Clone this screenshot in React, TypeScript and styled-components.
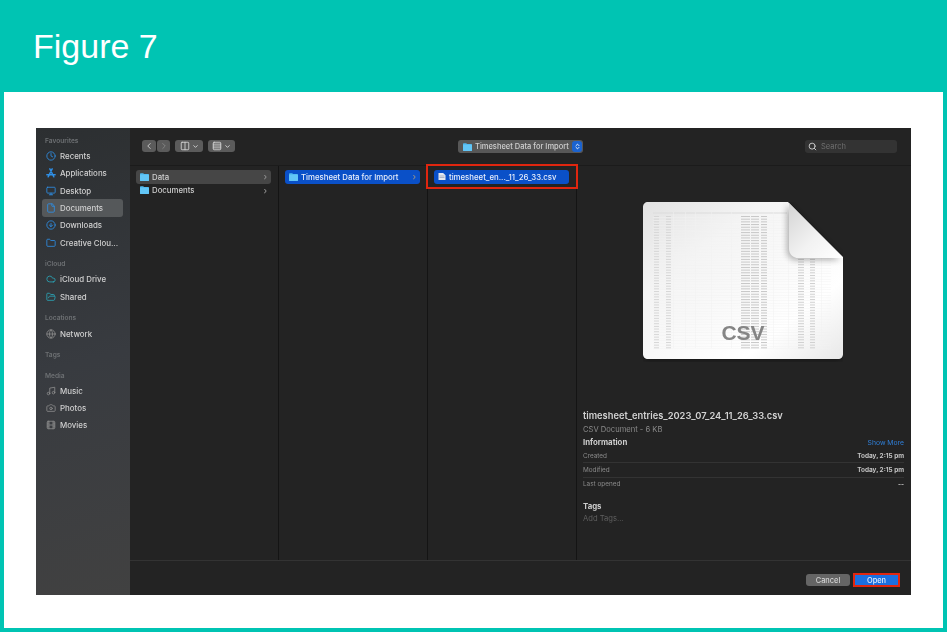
import React from 'react';
import styled, { createGlobalStyle } from 'styled-components';
import {
  Camera,
  ChevronDown,
  ChevronLeft,
  ChevronRight,
  ChevronsUpDown,
  CircleArrowDown,
  Clock,
  Cloud,
  Columns2,
  File,
  Film,
  Folder,
  FolderOpen,
  Globe,
  Monitor,
  Music,
  Rows4,
  Search,
} from 'lucide-react';

const GlobalStyle = createGlobalStyle`
  html, body {
    margin: 0;
    padding: 0;
    background: #00c4b3;
  }
  * {
    box-sizing: border-box;
  }
`;

const AppsIcon = ({ size = 10 }: { size?: number }) => (
  <svg width={size} height={size} viewBox="0 0 12 12" fill="none" stroke="currentColor" strokeWidth="1.7" strokeLinecap="round">
    <path d="M7.4 1 2.6 10.6M4.6 1l4.8 9.6M1 8h10" />
  </svg>
);

const FolderGlyph = () => (
  <svg width="9" height="8" viewBox="0 0 9 8">
    <path d="M0 1.2C0 .5.4.2 1 .2h2.2l.8.8H8c.6 0 1 .4 1 1V7c0 .6-.4 1-1 1H1C.4 8 0 7.6 0 7z" fill="#4fb9f0" />
    <rect y="1.8" width="9" height="6.2" rx=".8" fill="#62c6f7" />
  </svg>
);

const FileGlyph = () => (
  <svg width="8" height="7" viewBox="0 0 8 7">
    <path d="M.5 0h4.6L7.5 2.2V7H.5z" fill="#e4e8f0" />
    <path d="M1.5 3h5M1.5 4.5h5" stroke="#8a94ac" strokeWidth=".6" />
  </svg>
);

const rowYs = Array.from({ length: 50 }, (_, i) => 14 + i * 2.68);
const dataCols = [
  [11, 5],
  [23, 5],
  [98, 9],
  [108, 8],
  [118, 6],
];
const lowerCols = [
  [155, 6],
  [167, 5],
];
const gridXs = [30, 42, 52, 68, 88, 130, 145, 178];

const DocumentPreview = () => (
  <svg width="200" height="160" viewBox="0 0 200 160">
    <defs>
      <linearGradient id="sheet" x1="0" y1="0" x2="1" y2="1">
        <stop offset="0" stopColor="#e2e2e2" />
        <stop offset=".3" stopColor="#f4f4f4" />
        <stop offset=".75" stopColor="#ffffff" />
        <stop offset="1" stopColor="#e8e8e8" />
      </linearGradient>
      <linearGradient id="fold" x1="0" y1="0" x2="1" y2="1">
        <stop offset="0" stopColor="#d4d4d4" />
        <stop offset=".55" stopColor="#f2f2f2" />
        <stop offset="1" stopColor="#ffffff" />
      </linearGradient>
      <filter id="drop" x="-10%" y="-10%" width="120%" height="120%">
        <feGaussianBlur stdDeviation="3" />
      </filter>
      <filter id="soft" x="-2%" y="-2%" width="104%" height="104%">
        <feGaussianBlur stdDeviation=".35" />
      </filter>
    </defs>
    <path
      d="M6 1h139l54 54v97c0 3-2 5-5 5H6c-3 0-5-2-5-5V6c0-3 2-5 5-5z"
      fill="#000"
      opacity=".4"
      filter="url(#drop)"
      transform="translate(0 1.5)"
    />
    <path d="M5 0h140l55 55v97c0 3-2 5-5 5H5c-3 0-5-2-5-5V5c0-3 2-5 5-5z" fill="url(#sheet)" />
    <g filter="url(#soft)">
      <rect x="10" y="10.5" width="134" height="1" fill="#dcdcdc" />
      {gridXs.map((x) => (
        <rect key={x} x={x} y={x > 145 ? 56 : 10} width=".5" height={x > 145 ? 90 : 136} fill="#f0f0f0" />
      ))}
      {rowYs.map((y) => (
        <g key={y}>
          <rect x="10" y={y + 1.3} width={y > 55 ? 178 : 134} height=".4" fill="#f1f1f1" />
          {dataCols.map(([x, w]) => (
            <rect key={x} x={x} y={y} width={w} height="1" fill={x > 90 ? '#c8c8c8' : '#d6d6d6'} />
          ))}
          {y > 56 &&
            lowerCols.map(([x, w]) => (
              <rect key={x} x={x} y={y} width={w} height="1" fill="#d0d0d0" />
            ))}
        </g>
      ))}
    </g>
    <text x="100" y="138" textAnchor="middle" fontFamily="'Liberation Sans', sans-serif" fontWeight="700" fontSize="21" fill="#858585">
      CSV
    </text>
    <path d="M144 3v46c0 5 4 9 9 9h44z" fill="#000" opacity=".3" filter="url(#drop)" />
    <path d="M146 1v46c0 5 4 9 9 9h45z" fill="url(#fold)" />
  </svg>
);

type SidebarItem = { label: string; icon: React.ReactNode; tone?: string; active?: boolean };
type SidebarGroup = { title: string; items: SidebarItem[]; extra?: boolean };

const sidebarGroups: SidebarGroup[] = [
  {
    title: 'Favourites',
    items: [
      { label: 'Recents', icon: <Clock size={10} /> },
      { label: 'Applications', icon: <AppsIcon /> },
      { label: 'Desktop', icon: <Monitor size={10} /> },
      { label: 'Documents', icon: <File size={10} />, active: true },
      { label: 'Downloads', icon: <CircleArrowDown size={10} /> },
      { label: 'Creative Clou...', icon: <Folder size={10} /> },
    ],
  },
  {
    title: 'iCloud',
    items: [
      { label: 'iCloud Drive', icon: <Cloud size={10} />, tone: '#2ba6b8' },
      { label: 'Shared', icon: <FolderOpen size={10} />, tone: '#2ba6b8' },
    ],
  },
  {
    title: 'Locations',
    items: [{ label: 'Network', icon: <Globe size={10} />, tone: '#8b8b8b' }],
  },
  { title: 'Tags', items: [], extra: true },
  {
    title: 'Media',
    items: [
      { label: 'Music', icon: <Music size={10} />, tone: '#8b8b8b' },
      { label: 'Photos', icon: <Camera size={10} />, tone: '#8b8b8b' },
      { label: 'Movies', icon: <Film size={10} />, tone: '#8b8b8b' },
    ],
  },
];

const infoRows = [
  { label: 'Created', value: 'Today, 2:15 pm' },
  { label: 'Modified', value: 'Today, 2:15 pm' },
  { label: 'Last opened', value: '--' },
];

export default function App() {
  return (
    <>
      <GlobalStyle />
      <Page>
        <Header>Figure 7</Header>
        <Card>
          <Dialog>
            <Sidebar>
              {sidebarGroups.map((group) => (
                <SidebarSection key={group.title} $extra={group.extra}>
                  <SectionLabel>{group.title}</SectionLabel>
                  {group.items.map((item) => (
                    <SidebarRow key={item.label} $active={item.active}>
                      <RowIcon $tone={item.tone}>{item.icon}</RowIcon>
                      {item.label}
                    </SidebarRow>
                  ))}
                </SidebarSection>
              ))}
            </Sidebar>
            <Main>
              <Toolbar>
                <NavGroup>
                  <ToolButton $width={14}>
                    <ChevronLeft size={10} />
                  </ToolButton>
                  <ToolButton $width={13} $dim>
                    <ChevronRight size={10} />
                  </ToolButton>
                </NavGroup>
                <ToolButton $width={28}>
                  <Columns2 size={10} />
                  <ChevronDown size={7} strokeWidth={3} />
                </ToolButton>
                <ToolButton $width={27}>
                  <Rows4 size={10} />
                  <ChevronDown size={7} strokeWidth={3} />
                </ToolButton>
                <LocationPicker>
                  <FolderGlyph />
                  Timesheet Data for Import
                  <StepperBadge>
                    <ChevronsUpDown size={7} strokeWidth={3} />
                  </StepperBadge>
                </LocationPicker>
                <SearchBox>
                  <Search size={9} color="#c8c8c8" strokeWidth={2.6} />
                  Search
                </SearchBox>
              </Toolbar>
              <Browser>
                <Column>
                  <ColumnRow $state="muted">
                    <FolderGlyph />
                    <RowName>Data</RowName>
                    <Caret>›</Caret>
                  </ColumnRow>
                  <ColumnRow>
                    <FolderGlyph />
                    <RowName>Documents</RowName>
                    <Caret>›</Caret>
                  </ColumnRow>
                </Column>
                <Column>
                  <ColumnRow $state="selected">
                    <FolderGlyph />
                    <RowName>Timesheet Data for Import</RowName>
                    <Caret>›</Caret>
                  </ColumnRow>
                </Column>
                <Column>
                  <ColumnRow $state="selected" $flagged>
                    <FileGlyph />
                    <RowName>timesheet_en..._11_26_33.csv</RowName>
                  </ColumnRow>
                </Column>
                <Preview>
                  <PreviewArt>
                    <DocumentPreview />
                  </PreviewArt>
                  <FileName>timesheet_entries_2023_07_24_11_26_33.csv</FileName>
                  <FileKind>CSV Document - 6 KB</FileKind>
                  <InfoHeading>
                    <HeadingText>Information</HeadingText>
                    <ShowMore>Show More</ShowMore>
                  </InfoHeading>
                  {infoRows.map((row, i) => (
                    <InfoRow key={row.label} $last={i === infoRows.length - 1}>
                      <InfoLabel>{row.label}</InfoLabel>
                      <InfoValue>{row.value}</InfoValue>
                    </InfoRow>
                  ))}
                  <TagsHeading>Tags</TagsHeading>
                  <AddTags>Add Tags...</AddTags>
                </Preview>
              </Browser>
              <Footer>
                <CancelButton>Cancel</CancelButton>
                <OpenButton>Open</OpenButton>
              </Footer>
            </Main>
          </Dialog>
        </Card>
      </Page>
    </>
  );
}

const Page = styled.div`
  width: 947px;
  height: 632px;
  padding: 0 4px 4px;
  display: flex;
  flex-direction: column;
  background: #00c4b3;
  overflow: hidden;
`;

const Header = styled.div`
  height: 92px;
  padding: 27px 0 0 29px;
  font-family: 'Liberation Sans', Arial, sans-serif;
  font-size: 34px;
  line-height: 39px;
  color: #ffffff;
`;

const Card = styled.div`
  flex: 1;
  min-width: 0;
  background: #ffffff;
  padding: 36px 32px 33px;
  display: flex;
`;

const Dialog = styled.div`
  flex: 1;
  min-width: 0;
  display: flex;
  background: #232323;
  font-family: Inter, 'Liberation Sans', sans-serif;
  filter: blur(0.35px);
`;

const Sidebar = styled.div`
  width: 94px;
  flex: none;
  padding: 8px 7px 0 6px;
  background: linear-gradient(165deg, #2c2f31 0%, #383b40 50%, #414141 100%);
`;

const SidebarSection = styled.div<{ $extra?: boolean }>`
  margin-bottom: ${(p) => (p.$extra ? '9px' : '8px')};
`;

const SectionLabel = styled.div`
  height: 11.5px;
  padding-left: 3px;
  font-size: 6.6px;
  font-weight: 600;
  line-height: 11.5px;
  color: #6d7073;
`;

const SidebarRow = styled.div<{ $active?: boolean }>`
  height: 17.3px;
  padding-left: 4px;
  display: flex;
  align-items: center;
  gap: 4px;
  border-radius: 3px;
  font-size: 7.9px;
  font-weight: 500;
  color: #d0d0d0;
  white-space: nowrap;
  background: ${(p) => (p.$active ? '#55585a' : 'transparent')};
`;

const RowIcon = styled.span<{ $tone?: string }>`
  width: 10px;
  height: 10px;
  display: flex;
  color: ${(p) => p.$tone ?? '#2f8fe6'};
`;

const Main = styled.div`
  flex: 1;
  min-width: 0;
  display: flex;
  flex-direction: column;
`;

const Toolbar = styled.div`
  height: 38px;
  flex: none;
  padding: 12px 13px 0 12px;
  display: flex;
  align-items: flex-start;
  gap: 5px;
  border-bottom: 1px solid #1b1b1b;
`;

const NavGroup = styled.div`
  display: flex;
  gap: 1px;
`;

const ToolButton = styled.div<{ $width: number; $dim?: boolean }>`
  width: ${(p) => p.$width}px;
  height: 12px;
  display: flex;
  align-items: center;
  justify-content: center;
  gap: 2px;
  border-radius: 3px;
  background: #5b5b5b;
  color: ${(p) => (p.$dim ? '#8a8a8a' : '#d8d8d8')};
`;

const LocationPicker = styled.div`
  width: 125px;
  height: 13px;
  margin-left: 218px;
  padding: 0 1px 0 5px;
  display: flex;
  align-items: center;
  gap: 3px;
  border-radius: 3px;
  background: #575757;
  font-size: 7.5px;
  font-weight: 500;
  white-space: nowrap;
  color: #cfcfcf;
`;

const StepperBadge = styled.span`
  width: 10px;
  height: 11px;
  margin-left: auto;
  display: flex;
  align-items: center;
  justify-content: center;
  border-radius: 3px;
  background: #1b63d0;
  color: #ffffff;
`;

const SearchBox = styled.div`
  width: 92px;
  height: 13px;
  margin-left: 217px;
  padding-left: 3px;
  display: flex;
  align-items: center;
  gap: 4px;
  border-radius: 3px;
  background: #333333;
  font-size: 7.5px;
  color: #6f6f6f;
`;

const Browser = styled.div`
  flex: 1;
  min-height: 0;
  display: grid;
  grid-template-columns: 149px 149px 149px minmax(0, 1fr);
`;

const Column = styled.div`
  padding: 4px 7px 0 6px;
  border-right: 1px solid #141414;
`;

const ColumnRow = styled.div<{ $state?: 'muted' | 'selected'; $flagged?: boolean }>`
  position: relative;
  height: 13.5px;
  padding: 0 4px 0 3.5px;
  display: flex;
  align-items: center;
  gap: 3.5px;
  border-radius: 3px;
  font-size: 7.8px;
  font-weight: 500;
  white-space: nowrap;
  color: ${(p) => (p.$state === 'selected' ? '#e8eefb' : '#cfcfcf')};
  background: ${(p) =>
    p.$state === 'selected' ? '#0a50c8' : p.$state === 'muted' ? '#464646' : 'transparent'};

  ${(p) =>
    p.$flagged &&
    `
    &::after {
      content: '';
      position: absolute;
      inset: -6px -9px -5px -8px;
      border: 2px solid #e0260f;
    }
  `}
`;

const RowName = styled.span`
  flex: 1;
`;

const Caret = styled.span`
  font-size: 9px;
  line-height: 9px;
  color: #8e8e8e;
`;

const Preview = styled.div`
  padding: 36px 7px 0 6px;
  min-width: 0;
`;

const PreviewArt = styled.div`
  height: 208px;
  padding-left: 60px;
`;

const FileName = styled.div`
  font-size: 9.3px;
  font-weight: 600;
  line-height: 12px;
  color: #d2d2d2;
  white-space: nowrap;
`;

const FileKind = styled.div`
  margin-top: 2px;
  font-size: 7.6px;
  line-height: 11px;
  color: #8a8a8a;
`;

const InfoHeading = styled.div`
  height: 14px;
  display: flex;
  align-items: center;
  justify-content: space-between;
`;

const HeadingText = styled.span`
  font-size: 7.8px;
  font-weight: 700;
  color: #cdcdcd;
`;

const ShowMore = styled.span`
  font-size: 6.8px;
  color: #2f7fd8;
`;

const InfoRow = styled.div<{ $last?: boolean }>`
  height: 14.4px;
  display: flex;
  align-items: center;
  justify-content: space-between;
  border-bottom: 1px solid ${(p) => (p.$last ? 'transparent' : '#333333')};
`;

const InfoLabel = styled.span`
  font-size: 6.4px;
  color: #8a8a8a;
`;

const InfoValue = styled.span`
  font-size: 6.4px;
  font-weight: 700;
  color: #c4c4c4;
`;

const TagsHeading = styled.div`
  margin-top: 6.5px;
  font-size: 7.8px;
  font-weight: 700;
  line-height: 14px;
  color: #cdcdcd;
`;

const AddTags = styled.div`
  font-size: 7.6px;
  line-height: 12px;
  color: #5f5f5f;
`;

const Footer = styled.div`
  height: 35px;
  flex: none;
  padding: 12px 11px 8px 0;
  display: flex;
  justify-content: flex-end;
  align-items: center;
  gap: 3px;
  border-top: 1px solid #333333;
`;

const CancelButton = styled.div`
  width: 44px;
  height: 12px;
  display: flex;
  align-items: center;
  justify-content: center;
  border-radius: 3px;
  background: #656565;
  font-size: 7.4px;
  font-weight: 500;
  color: #d4d4d4;
`;

const OpenButton = styled.div`
  width: 47px;
  height: 14px;
  display: flex;
  align-items: center;
  justify-content: center;
  background: #1a6fe0;
  border: 2px solid #e0260f;
  font-size: 7.4px;
  font-weight: 500;
  color: #e6eefb;
`;
